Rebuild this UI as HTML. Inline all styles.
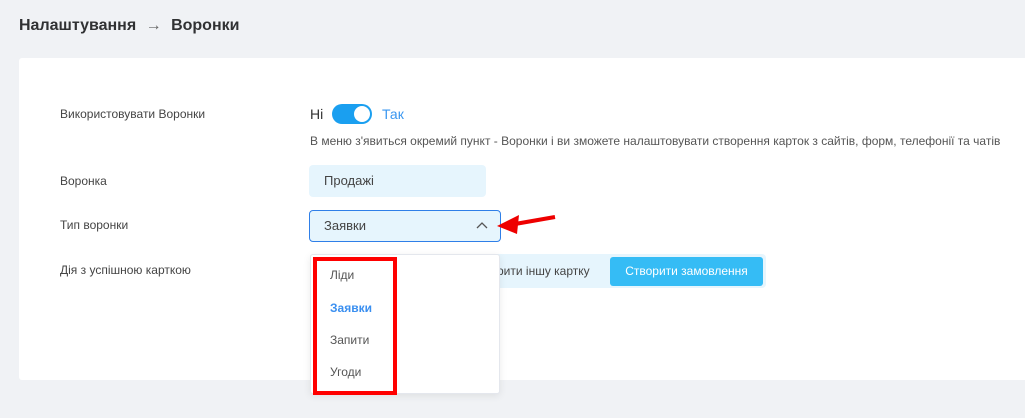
<!DOCTYPE html>
<html><head><meta charset="utf-8"><style>
*{margin:0;padding:0;box-sizing:border-box}
body{width:1025px;height:418px;background:#f0f2f5;font-family:"Liberation Sans",sans-serif;position:relative;overflow:hidden;color:#333}
.a{position:absolute}
.h{left:19px;top:17px;font-size:16px;font-weight:bold;color:#303133}
.card{left:19px;top:58px;width:1010px;height:322px;background:#fff;border-radius:3px}
.lbl{font-size:12px;color:#444;left:60px}
</style></head><body>
<div class="a h">Налаштування <span style="font-weight:normal;color:#666;margin:0 5px">→</span> Воронки</div>
<div class="a card"></div>
<div class="a lbl" style="top:107px">Використовувати Воронки</div>
<div class="a" style="left:310px;top:106px;font-size:14px;color:#333">Ні</div>
<div class="a" style="left:332px;top:104px;width:40px;height:20px;border-radius:10px;background:#1a9ff0"></div>
<div class="a" style="left:354px;top:106px;width:16px;height:16px;border-radius:50%;background:#fff"></div>
<div class="a" style="left:382px;top:106px;font-size:14px;color:#3a97f0">Так</div>
<div class="a" style="left:310px;top:134px;font-size:12px;color:#555">В меню з'явиться окремий пункт - Воронки і ви зможете налаштовувати створення карток з сайтів, форм, телефонії та чатів</div>
<div class="a lbl" style="top:174px">Воронка</div>
<div class="a" style="left:309px;top:165px;width:177px;height:32px;background:#e6f5fd;border-radius:4px;font-size:13px;color:#444;padding:8px 15px">Продажі</div>
<div class="a lbl" style="top:218px">Тип воронки</div>
<div class="a" style="left:309px;top:210px;width:192px;height:32px;background:#e6f5fd;border:1px solid #2f7fe8;border-radius:4px;font-size:13px;color:#444;padding:7px 14px">Заявки</div>
<svg class="a" style="left:476px;top:221px" width="12" height="10"><path d="M1 7 L6 2 L11 7" fill="none" stroke="#555" stroke-width="1.3"/></svg>
<svg class="a" style="left:495px;top:210px" width="65" height="26"><path d="M60 7 L20 14" stroke="#e00" stroke-width="4"/><path d="M2 16 L24 5 L22 24 Z" fill="#e00"/></svg>
<div class="a lbl" style="top:263px">Дія з успішною карткою</div>
<div class="a" style="left:400px;top:254px;width:366px;height:34px;background:#e6f5fd;border-radius:4px"></div>
<div class="a" style="left:497px;top:264px;font-size:12px;color:#444">рити іншу картку</div>
<div class="a" style="left:610px;top:257px;width:153px;height:29px;background:#35bcf5;border-radius:3px;color:#fff;font-size:12px;text-align:center;line-height:29px">Створити замовлення</div>
<div class="a" style="left:310px;top:254px;width:190px;height:140px;background:#fff;border:1px solid #e4e7ed;border-radius:3px;box-shadow:0 2px 8px rgba(0,0,0,.08)"></div>
<div class="a" style="left:313px;top:257px;width:84px;height:138px;border:4px solid #f00"></div>
<div class="a" style="left:330px;top:268px;font-size:12px;color:#555">Ліди</div>
<div class="a" style="left:330px;top:301px;font-size:12px;color:#3a8ff0;font-weight:bold">Заявки</div>
<div class="a" style="left:330px;top:333px;font-size:12px;color:#555">Запити</div>
<div class="a" style="left:330px;top:365px;font-size:12px;color:#555">Угоди</div>
</body></html>
